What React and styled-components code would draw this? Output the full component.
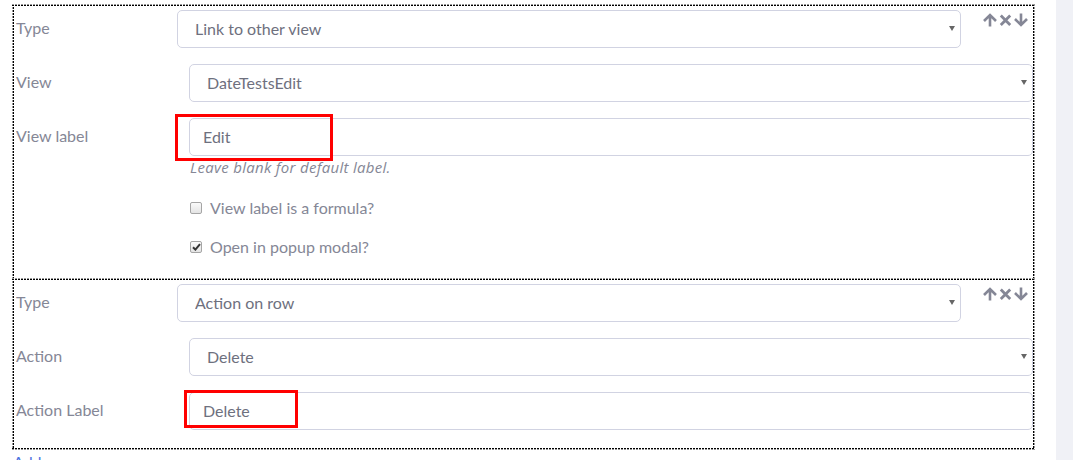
import React from 'react';
import styled, { createGlobalStyle } from 'styled-components';

const GlobalStyle = createGlobalStyle`
  html, body {
    margin: 0;
    padding: 0;
    background: #fff;
  }
  body {
    font-family: Lato, "Open Sans", sans-serif;
    font-size: 16px;
    color: #858796;
    overflow: hidden;
  }
`;

const dash = (dir, color) =>
  `repeating-linear-gradient(${dir}, ${color} 0 2px, transparent 2px 3px)`;

const Page = styled.div`
  display: flex;
  height: 460px;
`;

const Main = styled.div`
  flex: 1;
  min-width: 0;
  padding: 4px 21px 0 12px;
`;

const Sidebar = styled.div`
  width: 17px;
  background: #f0f1f6;
`;

// dashed frame: a black 1px dash line with a softer shadow line beside it
const Item = styled.div`
  padding: 6px 2px 4px 3px;
  background:
    ${dash('90deg', '#000')} 0 1px / 100% 1px no-repeat,
    ${dash('90deg', '#999')} 0 0 / 100% 1px no-repeat,
    ${dash('90deg', '#000')} 0 calc(100% - 1px) / 100% 1px no-repeat,
    ${dash('90deg', '#999')} 0 100% / 100% 1px no-repeat,
    ${dash('180deg', '#000')} 1px 0 / 1px 100% no-repeat,
    ${dash('180deg', '#999')} 0 0 / 1px 100% no-repeat,
    ${dash('180deg', '#000')} calc(100% - 1px) 0 / 1px 100% no-repeat,
    ${dash('180deg', '#999')} 100% 0 / 1px 100% no-repeat;
  & + & {
    margin-top: -2px;
  }
`;

const Row = styled.div`
  display: grid;
  grid-template-columns: 162px 1fr ${p => (p.$tools ? '72px' : '')};
  align-items: center;
  margin-bottom: ${p => (p.$mb !== undefined ? p.$mb : 16)}px;
`;

const Label = styled.label`
  color: #858796;
  line-height: 24px;
  padding: 0 0 2px 1px;
`;

const Field = styled.div`
  position: relative;
  padding-left: ${p => p.$indent || 0}px;
`;

const Select = styled.select`
  appearance: none;
  display: block;
  width: 100%;
  height: 38px;
  box-sizing: border-box;
  border: 1px solid #d1d3e2;
  border-radius: 5px;
  background: #fff;
  padding: 0 24px 2px 17px;
  font: inherit;
  color: #6e707e;
  outline: none;
`;

const Caret = styled.span`
  position: absolute;
  right: 6px;
  top: 16px;
  width: 0;
  height: 0;
  border-left: 3.5px solid transparent;
  border-right: 3.5px solid transparent;
  border-top: 5px solid #666;
  pointer-events: none;
`;

const Input = styled.input`
  display: block;
  width: 100%;
  height: 38px;
  box-sizing: border-box;
  border: 1px solid #d1d3e2;
  border-radius: 5px;
  background: #fff;
  padding: 0 12px 2px 13px;
  font: inherit;
  color: #6e707e;
  outline: none;
`;

const Highlight = styled.span`
  position: absolute;
  left: ${p => p.$left}px;
  top: ${p => p.$top}px;
  width: ${p => p.$w}px;
  height: ${p => p.$h}px;
  box-sizing: border-box;
  border: 3px solid #ff0000;
  pointer-events: none;
`;

const HelpText = styled.div`
  font-family: "Open Sans", Lato, sans-serif;
  font-size: 15px;
  font-style: italic;
  letter-spacing: 0.3px;
  line-height: 20px;
  color: #858796;
  padding-left: 1px;
`;

const Check = styled.label`
  display: flex;
  align-items: center;
  gap: 8px;
  line-height: 24px;
  color: #858796;
  padding-left: 1px;
`;

const Box = styled.span`
  display: inline-flex;
  align-items: center;
  justify-content: center;
  width: 12px;
  height: 12px;
  box-sizing: border-box;
  border: 1px solid #a5a5a5;
  border-radius: 2px;
  background: linear-gradient(#fafafa, #e4e4e4);
`;

const Tools = styled.div`
  align-self: start;
  display: flex;
  gap: 2px;
  padding: 3px 0 0 22px;
  color: #858796;
`;

const AddLink = styled.a`
  display: block;
  color: #4e73df;
  text-decoration: none;
  line-height: 24px;
  padding-left: 1px;
`;

const ArrowUp = () => (
  <svg width="14" height="14" viewBox="0 0 14 14" fill="none" stroke="currentColor" strokeWidth="2.6">
    <path d="M7 13.5V2.5M1 8L7 2l6 6" />
  </svg>
);

const ArrowDown = () => (
  <svg width="14" height="14" viewBox="0 0 14 14" fill="none" stroke="currentColor" strokeWidth="2.6">
    <path d="M7 0.5V11.5M1 6l6 6 6-6" />
  </svg>
);

const Cross = () => (
  <svg width="13" height="14" viewBox="0 0 13 14" fill="none" stroke="currentColor" strokeWidth="2.8">
    <path d="M1.8 2.6l9.4 9.4M11.2 2.6l-9.4 9.4" />
  </svg>
);

const Tick = () => (
  <svg width="9" height="8" viewBox="0 0 9 8" fill="none" stroke="#333" strokeWidth="2">
    <path d="M1 4.2l2.4 2.4L8 1.2" />
  </svg>
);

const SelectField = ({ value, indent }) => (
  <Field $indent={indent}>
    <Select defaultValue={value}>
      <option>{value}</option>
    </Select>
    <Caret />
  </Field>
);

const Checkbox = ({ checked, children }) => (
  <Check>
    <Box>{checked && <Tick />}</Box>
    {children}
  </Check>
);

const RowTools = () => (
  <Tools>
    <ArrowUp />
    <Cross />
    <ArrowDown />
  </Tools>
);

export default function App() {
  return (
    <Page>
      <GlobalStyle />
      <Main>
        <Item>
          <Row $tools>
            <Label>Type</Label>
            <SelectField value="Link to other view" />
            <RowTools />
          </Row>
          <Row>
            <Label>View</Label>
            <SelectField value="DateTestsEdit" indent={12} />
          </Row>
          <Row $mb={1}>
            <Label>View label</Label>
            <Field $indent={12}>
              <Input defaultValue="Edit" />
              <Highlight $left={-2} $top={-4} $w={158} $h={47} />
            </Field>
          </Row>
          <Row $mb={19}>
            <span />
            <Field $indent={12}>
              <HelpText>Leave blank for default label.</HelpText>
            </Field>
          </Row>
          <Row $mb={15}>
            <span />
            <Field $indent={12}>
              <Checkbox>View label is a formula?</Checkbox>
            </Field>
          </Row>
          <Row $mb={17}>
            <span />
            <Field $indent={12}>
              <Checkbox checked>Open in popup modal?</Checkbox>
            </Field>
          </Row>
        </Item>
        <Item>
          <Row $tools>
            <Label>Type</Label>
            <SelectField value="Action on row" />
            <RowTools />
          </Row>
          <Row>
            <Label>Action</Label>
            <SelectField value="Delete" indent={12} />
          </Row>
          <Row>
            <Label>Action Label</Label>
            <Field $indent={12}>
              <Input defaultValue="Delete" />
              <Highlight $left={7} $top={-2} $w={114} $h={38} />
            </Field>
          </Row>
        </Item>
        <AddLink href="#">Add</AddLink>
      </Main>
      <Sidebar />
    </Page>
  );
}
